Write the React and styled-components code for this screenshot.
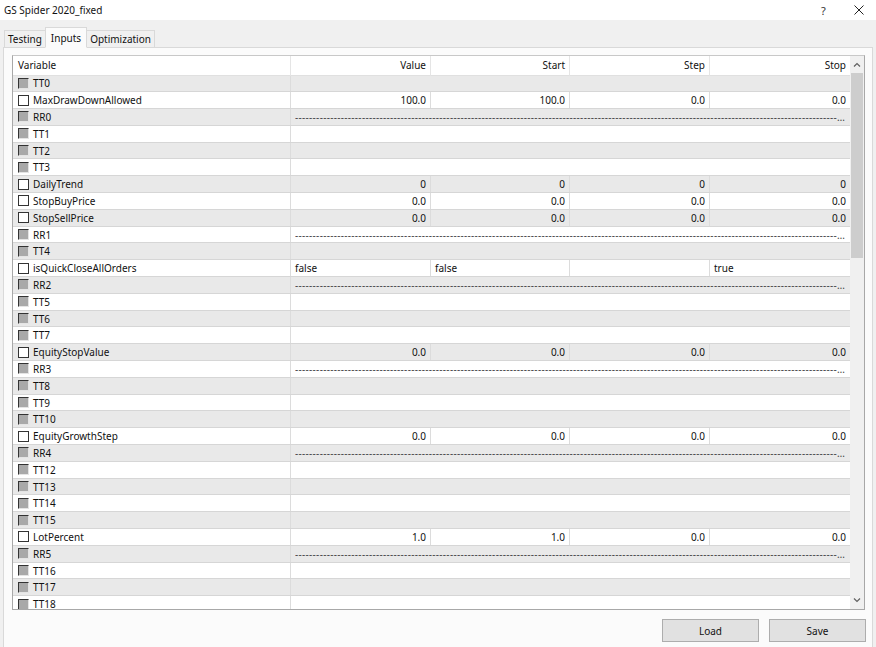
import React from 'react';
import styled, { createGlobalStyle } from 'styled-components';

const GlobalStyle = createGlobalStyle`
  html, body {
    margin: 0;
    padding: 0;
    background: #f0f0f0;
  }
  body {
    font-family: "Noto Sans", "Liberation Sans", sans-serif;
    font-size: 10px;
    color: #1a1a1a;
  }
`;

const Window = styled.div`
  width: 876px;
  height: 647px;
  display: flex;
  flex-direction: column;
  background: #f0f0f0;
  overflow: hidden;
`;

const TitleBar = styled.div`
  height: 20px;
  flex: none;
  display: flex;
  align-items: center;
  background: #fff;
  padding-left: 4px;
`;

const Title = styled.div`
  flex: 1;
  font-size: 10px;
  color: #111;
`;

const TitleButton = styled.div`
  width: 35px;
  height: 20px;
  display: flex;
  align-items: center;
  justify-content: center;
  font-size: 11px;
  color: #333;
`;

const Body = styled.div`
  flex: 1;
  display: flex;
  flex-direction: column;
  padding: 6px 3px 0 3px;
  min-height: 0;
`;

const TabStrip = styled.div`
  display: flex;
  align-items: flex-end;
  height: 21px;
  flex: none;
  padding-left: 1px;
  position: relative;
  z-index: 1;
`;

const Tab = styled.div`
  height: ${p => (p.active ? '21px' : '18px')};
  box-sizing: border-box;
  padding: 0 ${p => (p.active ? '5px' : '3px')};
  display: flex;
  align-items: center;
  border: 1px solid #d9d9d9;
  border-bottom: ${p => (p.active ? '1px solid #fbfbfb' : '1px solid #d9d9d9')};
  margin-left: ${p => (p.first ? '0' : '-1px')};
  background: ${p => (p.active ? '#fbfbfb' : '#f0f0f0')};
  font-size: 10px;
  color: #111;
  margin-bottom: -1px;
  position: relative;
  z-index: ${p => (p.active ? 2 : 1)};
`;

const Panel = styled.div`
  flex: 1;
  display: flex;
  flex-direction: column;
  background: #fbfbfb;
  border: 1px solid #d9d9d9;
  border-bottom: none;
  padding: 7px 7px 0 8px;
  min-height: 0;
`;

const Table = styled.div`
  height: 555px;
  flex: none;
  box-sizing: border-box;
  display: flex;
  border: 1px solid #a8a8a8;
  border-top-color: #c8c8c8;
  background: #fff;
  overflow: hidden;
`;

const Grid = styled.div`
  flex: 1;
  overflow: hidden;
`;

const COLS = '278px 140px 139px 140px 140px';

const HeaderRow = styled.div`
  display: grid;
  grid-template-columns: ${COLS};
  height: 19.5px;
  background: #fff;
`;

const HeaderCell = styled.div`
  display: flex;
  align-items: center;
  justify-content: ${p => (p.left ? 'flex-start' : 'flex-end')};
  padding: 0 4px 1px 5px;
  border-right: ${p => (p.last ? 'none' : '1px solid #e5e5e5')};
  border-bottom: 1px solid #e0e0e0;
  box-sizing: border-box;
  font-size: 10px;
  color: #111;
`;

const Row = styled.div`
  display: grid;
  grid-template-columns: ${COLS};
  height: 16.8px;
  box-sizing: border-box;
  background: ${p => (p.shade ? '#e9e9e9' : '#fff')};
  border-bottom: 1px solid #d6d6d6;
`;

const NameCell = styled.div`
  display: flex;
  align-items: center;
  gap: 4px;
  padding-left: 5px;
  border-right: 1px solid #dcdcdc;
  font-size: 10px;
  color: #111;
  white-space: nowrap;
  overflow: hidden;
`;

const Box = styled.span`
  width: 9px;
  height: 9px;
  flex: none;
  border: 1px solid #333;
  border-right-color: ${p => (p.disabled ? '#e4e4e4' : '#333')};
  border-bottom-color: ${p => (p.disabled ? '#e4e4e4' : '#333')};
  background: ${p => (p.disabled ? '#a9a9a9' : '#fff')};
`;

const ValueCell = styled.div`
  display: flex;
  align-items: center;
  justify-content: ${p => (p.left ? 'flex-start' : 'flex-end')};
  padding: 0 4px;
  border-right: ${p => (p.last ? 'none' : '1px solid #dcdcdc')};
  font-size: 10px;
  color: #111;
  white-space: nowrap;
  overflow: hidden;
`;

const SpanCell = styled.div`
  grid-column: 2 / 6;
  display: flex;
  align-items: center;
  padding: 0 3px 0 4px;
  overflow: hidden;
`;

const Dashes = styled.div`
  flex: 1;
  white-space: nowrap;
  overflow: hidden;
  text-overflow: ellipsis;
  font-size: 10px;
  letter-spacing: 0.3px;
  color: #444;
  line-height: 12px;
`;

const ScrollBar = styled.div`
  width: 14px;
  flex: none;
  display: flex;
  flex-direction: column;
  background: #f0f0f0;
`;

const Arrow = styled.div`
  height: 17px;
  display: flex;
  align-items: center;
  justify-content: center;
  flex: none;
`;

const Track = styled.div`
  flex: 1;
  padding: 0 1px;
`;

const Thumb = styled.div`
  height: 185px;
  background: #cdcdcd;
`;

const Footer = styled.div`
  flex: 1;
  display: flex;
  justify-content: flex-end;
  align-items: flex-start;
  gap: 10px;
  padding-top: 9px;
  margin-right: -1px;
`;

const Button = styled.button`
  width: 97px;
  height: 23px;
  background: #e1e1e1;
  border: 1px solid #adadad;
  font-family: "Noto Sans", "Liberation Sans", sans-serif;
  font-size: 10px;
  color: #111;
  padding: 0;
`;

const rows = [
  ['TT0', 'tt'],
  ['MaxDrawDownAllowed', 'num', ['100.0', '100.0', '0.0', '0.0']],
  ['RR0', 'rr'],
  ['TT1', 'tt'],
  ['TT2', 'tt'],
  ['TT3', 'tt'],
  ['DailyTrend', 'num', ['0', '0', '0', '0']],
  ['StopBuyPrice', 'num', ['0.0', '0.0', '0.0', '0.0']],
  ['StopSellPrice', 'num', ['0.0', '0.0', '0.0', '0.0']],
  ['RR1', 'rr'],
  ['TT4', 'tt'],
  ['isQuickCloseAllOrders', 'bool', ['false', 'false', '', 'true']],
  ['RR2', 'rr'],
  ['TT5', 'tt'],
  ['TT6', 'tt'],
  ['TT7', 'tt'],
  ['EquityStopValue', 'num', ['0.0', '0.0', '0.0', '0.0']],
  ['RR3', 'rr'],
  ['TT8', 'tt'],
  ['TT9', 'tt'],
  ['TT10', 'tt'],
  ['EquityGrowthStep', 'num', ['0.0', '0.0', '0.0', '0.0']],
  ['RR4', 'rr'],
  ['TT12', 'tt'],
  ['TT13', 'tt'],
  ['TT14', 'tt'],
  ['TT15', 'tt'],
  ['LotPercent', 'num', ['1.0', '1.0', '0.0', '0.0']],
  ['RR5', 'rr'],
  ['TT16', 'tt'],
  ['TT17', 'tt'],
  ['TT18', 'tt'],
];

const Chevron = ({ up }) => (
  <svg width="8" height="5" viewBox="0 0 8 5">
    <polyline
      points={up ? '1,4.5 4,1.5 7,4.5' : '1,0.5 4,3.5 7,0.5'}
      fill="none"
      stroke="#606060"
      strokeWidth="1.2"
    />
  </svg>
);

const CloseIcon = () => (
  <svg width="10" height="10" viewBox="0 0 10 10">
    <path d="M0.5 0.5 L9.5 9.5 M9.5 0.5 L0.5 9.5" stroke="#222" strokeWidth="1" />
  </svg>
);

function renderRow([name, kind, values], i) {
  const disabled = kind === 'tt' || kind === 'rr';
  return (
    <Row key={name} shade={i % 2 === 0}>
      <NameCell>
        <Box disabled={disabled} />
        {name}
      </NameCell>
      {kind === 'tt' && <SpanCell />}
      {kind === 'rr' && (
        <SpanCell>
          <Dashes>{'-'.repeat(200)}</Dashes>
        </SpanCell>
      )}
      {(kind === 'num' || kind === 'bool') &&
        values.map((v, j) => (
          <ValueCell key={j} left={kind === 'bool'} last={j === 3}>
            {v}
          </ValueCell>
        ))}
    </Row>
  );
}

export default function App() {
  return (
    <Window>
      <GlobalStyle />
      <TitleBar>
        <Title>GS Spider 2020_fixed</Title>
        <TitleButton>?</TitleButton>
        <TitleButton>
          <CloseIcon />
        </TitleButton>
      </TitleBar>
      <Body>
        <TabStrip>
          <Tab first>Testing</Tab>
          <Tab active>Inputs</Tab>
          <Tab>Optimization</Tab>
        </TabStrip>
        <Panel>
          <Table>
            <Grid>
              <HeaderRow>
                <HeaderCell left>Variable</HeaderCell>
                <HeaderCell>Value</HeaderCell>
                <HeaderCell>Start</HeaderCell>
                <HeaderCell>Step</HeaderCell>
                <HeaderCell last>Stop</HeaderCell>
              </HeaderRow>
              {rows.map(renderRow)}
            </Grid>
            <ScrollBar>
              <Arrow>
                <Chevron up />
              </Arrow>
              <Track>
                <Thumb />
              </Track>
              <Arrow>
                <Chevron />
              </Arrow>
            </ScrollBar>
          </Table>
          <Footer>
            <Button>Load</Button>
            <Button>Save</Button>
          </Footer>
        </Panel>
      </Body>
    </Window>
  );
}
